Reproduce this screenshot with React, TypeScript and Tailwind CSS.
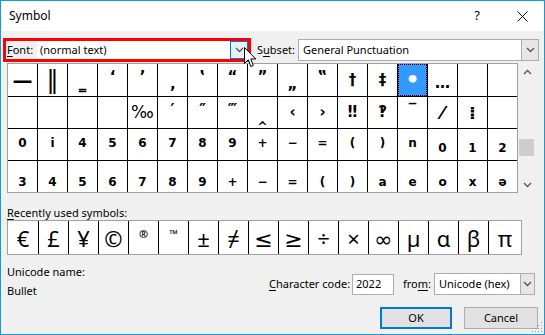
import React from 'react';

type Al = 't' | 'm' | 'b';
type Cell = { c: string; a?: Al; k?: string; sel?: boolean };

const AL: Record<Al, string> = {
  t: 'justify-start pt-[6px]',
  m: 'justify-center',
  b: 'justify-end pb-[4px]',
};

const e: Cell = { c: '' };

const GRID: Cell[][] = [
  [
    { c: '—', a: 'm', k: 'text-[20px]' },
    { c: '‖', a: 'm', k: 'text-[24px] font-normal' },
    { c: '‗', a: 'b' },
    { c: '‘', a: 't' },
    { c: '’', a: 't' },
    { c: '‚', a: 'b' },
    { c: '‛', a: 't' },
    { c: '“', a: 't' },
    { c: '”', a: 't' },
    { c: '„', a: 'b' },
    { c: '‟', a: 't' },
    { c: '†', a: 'm' },
    { c: '‡', a: 'm' },
    { c: '•', a: 'm', k: 'text-[22px]', sel: true },
    { c: '…', a: 'm', k: 'pt-[6px]' },
    e,
    e,
  ],
  [
    e,
    e,
    e,
    e,
    { c: '‰', a: 'm', k: 'text-[17px] font-normal' },
    { c: '′', a: 't' },
    { c: '″', a: 't' },
    { c: '‴', a: 't' },
    { c: '‸', a: 'b' },
    { c: '‹', a: 'm' },
    { c: '›', a: 'm' },
    { c: '‼', a: 'm' },
    { c: '‽', a: 'm' },
    { c: '‾', a: 't', k: 'pt-[2px]' },
    { c: '⁄', a: 'm', k: 'text-[18px]' },
    { c: '⁞', a: 'm', k: 'text-[18px]' },
    e,
  ],
  [
    ...['0', 'i', '4', '5', '6', '7', '8', '9', '+', '−', '=', '(', ')', 'n'].map((c) => ({ c, a: 't' as Al, k: 'text-[12px] pt-[8px]' })),
    ...['0', '1', '2'].map((c) => ({ c, a: 'b' as Al, k: 'text-[12px] pb-[6px]' })),
  ],
  ['3', '4', '5', '6', '7', '8', '9', '+', '−', '=', '(', ')', 'a', 'e', 'o', 'x', 'ə'].map((c) => ({
    c,
    a: 'b' as Al,
    k: 'text-[12px]',
  })),
];

const RECENT = ['€', '£', '¥', '©', '®', '™', '±', '≠', '≤', '≥', '÷', '×', '∞', 'µ', 'α', 'β', 'π'];

function Chevron({ up = false }: { up?: boolean }) {
  return (
    <svg width="9" height="6" viewBox="0 0 9 6">
      <path d={up ? 'M1 5 L4.5 1.5 L8 5' : 'M1 1 L4.5 4.5 L8 1'} fill="none" stroke="#555" strokeWidth="1.3" />
    </svg>
  );
}

function U({ children }: { children: React.ReactNode }) {
  return <span className="underline underline-offset-[2px]">{children}</span>;
}

export default function App() {
  return (
    <div className="relative flex h-[335px] w-[545px] flex-col border border-[#1899d6] bg-[#f0f0f0] font-['Noto_Sans','DejaVu_Sans',sans-serif] text-[11px] text-black">
      {/* Title bar */}
      <div className="flex h-[30px] items-center bg-white">
        <span className="pl-[8px] text-[12px]">Symbol</span>
        <div className="flex-1" />
        <span className="flex w-[46px] justify-center text-[13px]">?</span>
        <span className="flex w-[44px] justify-center">
          <svg width="11" height="11" viewBox="0 0 11 11">
            <path d="M0.5 0.5 L10.5 10.5 M10.5 0.5 L0.5 10.5" stroke="#111" strokeWidth="1" />
          </svg>
        </span>
      </div>

      {/* Font / Subset */}
      <div className="mt-[7px] flex items-center pl-[2px]">
        <div className="flex h-[24px] w-[248px] items-center border-[3px] border-[#ff0000]">
          <span className="w-[31px] pl-[1px]">
            <U>F</U>ont:
          </span>
          <div className="flex h-full flex-1 items-center bg-white">
            <span className="flex-1 pl-[3px]">(normal text)</span>
            <div className="flex h-full w-[18px] items-center justify-center border border-[#0078d7] bg-[#e5f1fb]">
              <Chevron />
            </div>
          </div>
        </div>
        <span className="ml-[6px] w-[41px]">
          S<U>u</U>bset:
        </span>
        <div className="flex h-[22px] w-[241px] items-center border border-[#adadad] bg-white">
          <span className="flex-1 pl-[4px]">General Punctuation</span>
          <div className="flex h-full w-[17px] items-center justify-center border-l border-[#adadad] bg-[#e6e6e6]">
            <Chevron />
          </div>
        </div>
      </div>

      {/* Character grid */}
      <div className="mt-[1px] flex pl-[6px]">
        <div className="grid grid-cols-[repeat(17,29px)] grid-rows-[32px_31px_31px_31px] gap-px border border-[#a0a0a0] bg-black font-['DejaVu_Sans',sans-serif] text-[15px] font-bold leading-none">
          {GRID.flat().map((cell, i) => (
            <div
              key={i}
              className={`flex flex-col items-center ${AL[cell.a ?? 'm']} ${cell.k ?? ''} ${
                cell.sel ? 'border border-dotted border-black bg-[#3399ff] text-white' : 'bg-white'
              }`}
            >
              {cell.c}
            </div>
          ))}
        </div>
        <div className="flex h-[130px] w-[18px] flex-col">
          <div className="flex h-[17px] items-center justify-center">
            <Chevron up />
          </div>
          <div className="h-[59px]" />
          <div className="ml-[1px] h-[17px] w-[15px] bg-[#cdcdcd]" />
          <div className="flex-1" />
          <div className="flex h-[17px] items-center justify-center">
            <Chevron />
          </div>
        </div>
      </div>

      {/* Recently used */}
      <div className="mt-[13px] h-[14px] pl-[6px] leading-[14px]">
        <U>R</U>ecently used symbols:
      </div>
      <div className="ml-[6px] flex h-[35px] w-[515px] border border-[#a0a0a0] bg-white text-[22px] leading-none">
        {RECENT.map((s, i) => {
          const small = s === '®' || s === '™';
          const w = i === 0 ? 'w-[31px]' : i === RECENT.length - 1 ? 'flex-1' : 'w-[30px]';
          return (
            <div
              key={i}
              className={`flex ${w} justify-center ${i < RECENT.length - 1 ? 'border-r border-black' : ''} ${
                small ? 'items-start pt-[7px] text-[11px] font-bold' : 'items-center'
              }`}
            >
              {s}
            </div>
          );
        })}
      </div>

      {/* Bottom */}
      <div className="flex flex-1">
        <div className="pl-[6px] pt-[9px] leading-[16px]">
          <div>Unicode name:</div>
          <div className="mt-[3px]">Bullet</div>
        </div>
        <div className="ml-auto mr-[6px] flex flex-col items-end pt-[18px]">
          <div className="mr-[3px] flex items-center whitespace-nowrap">
            <span className="w-[83px]">
              <U>C</U>haracter code:
            </span>
            <div className="flex h-[21px] w-[42px] items-center border border-[#adadad] bg-white pl-[3px]">2022</div>
            <span className="w-[40px] pl-[9px]">
              fro<U>m</U>:
            </span>
            <div className="flex h-[22px] w-[101px] items-center border border-[#adadad] bg-white">
              <span className="flex-1 pl-[4px]">Unicode (hex)</span>
              <div className="flex h-full w-[14px] items-center justify-center border-l border-[#adadad] bg-[#e6e6e6]">
                <Chevron />
              </div>
            </div>
          </div>
          <div className="mt-[12px] flex gap-[12px]">
            <button className="flex h-[22px] w-[72px] items-center justify-center border-2 border-[#0078d7] bg-[#e1e1e1]">
              OK
            </button>
            <button className="flex h-[22px] w-[74px] items-center justify-center border border-[#adadad] bg-[#e1e1e1]">
              Cancel
            </button>
          </div>
        </div>
      </div>

      {/* Mouse pointer over the font dropdown */}
      <svg className="absolute left-[243px] top-[46px]" width="13" height="21" viewBox="0 0 13 21">
        <path d="M0.5 0.5 L0.5 16.5 L4.3 12.8 L6.8 19.5 L9.3 18.5 L6.8 12 L11.8 12 Z" fill="white" stroke="black" strokeWidth="1" />
      </svg>

      {/* Resize grip */}
      <svg className="absolute bottom-[1px] right-[1px]" width="11" height="11" viewBox="0 0 11 11">
        {[
          [9, 1],
          [9, 4],
          [6, 4],
          [9, 7],
          [6, 7],
          [3, 7],
          [9, 10],
          [6, 10],
          [3, 10],
          [0, 10],
        ].map(([x, y], i) => (
          <rect key={i} x={x} y={y - 1} width="1" height="1" fill="#999" />
        ))}
      </svg>
    </div>
  );
}
